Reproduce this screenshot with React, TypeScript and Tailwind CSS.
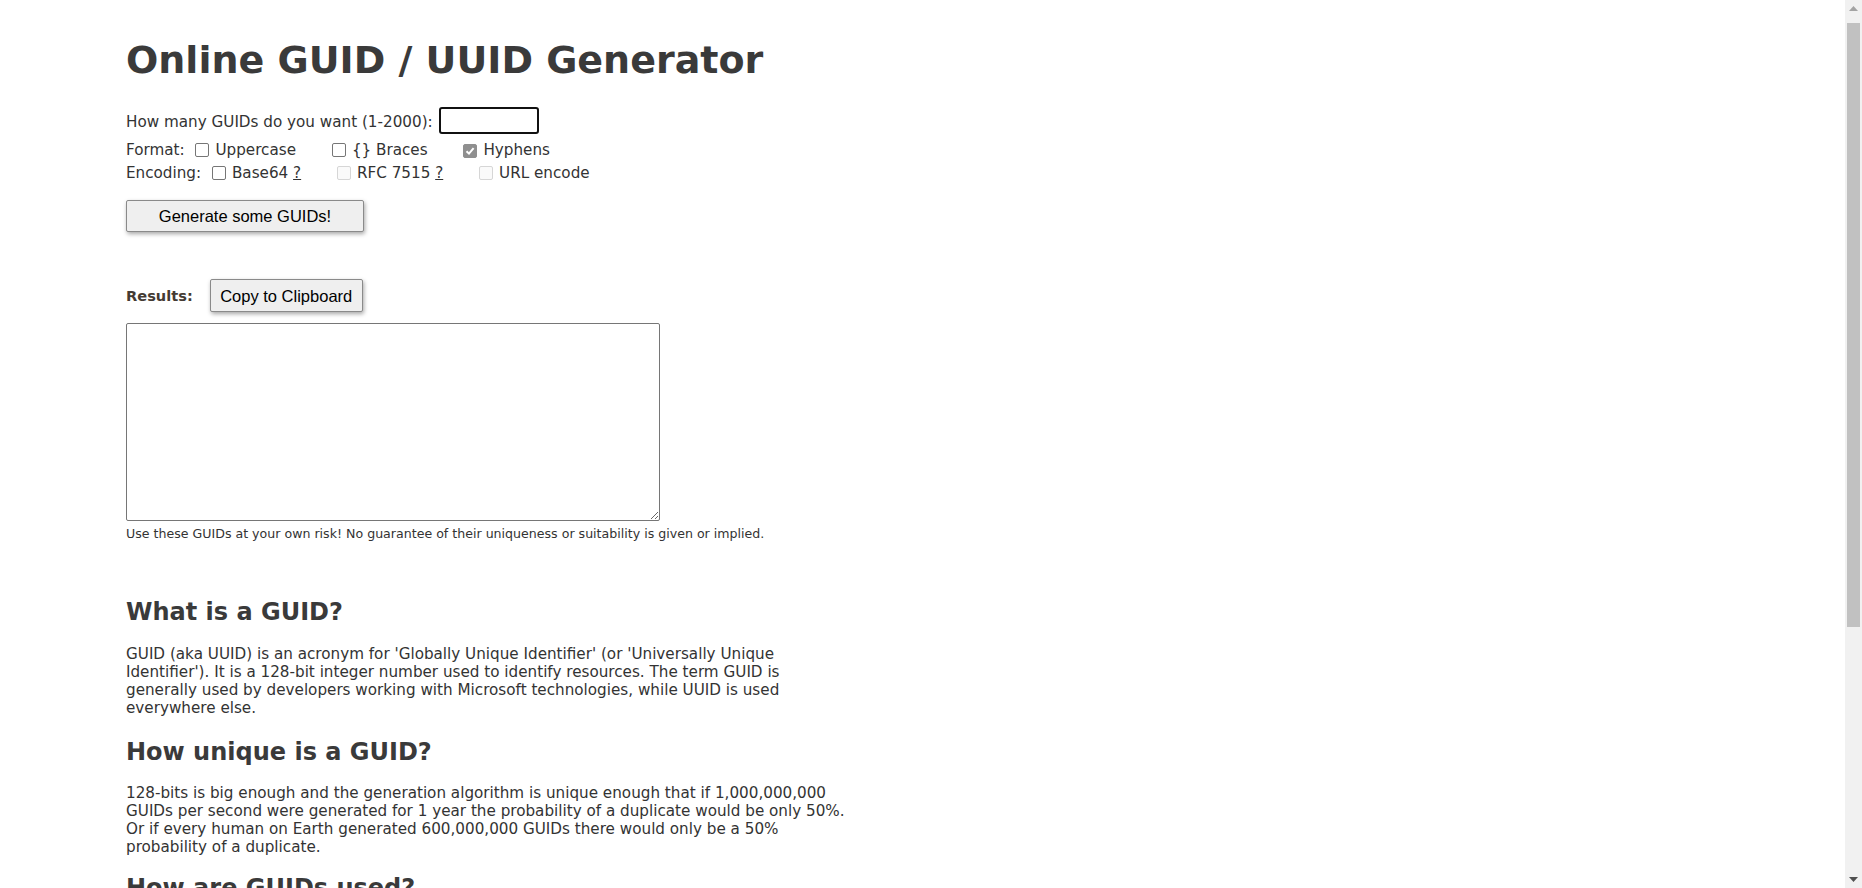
import React from 'react';

const body = { fontFamily: '"DejaVu Sans", Verdana, sans-serif' };
const btn = { fontFamily: '"Liberation Sans", Arial, sans-serif' };

function Box({ checked, disabled }: { checked?: boolean; disabled?: boolean }) {
  let cls = 'border-[#767676] bg-white';
  if (disabled && checked) cls = 'border-[#8f8f8f] bg-[#8f8f8f]';
  else if (disabled) cls = 'border-[#d6d6d6] bg-[#fafafa]';
  return (
    <span
      className={`ml-[6px] mr-[6px] inline-flex h-[14px] w-[14px] items-center justify-center rounded-[2px] border align-[-2px] ${cls}`}
    >
      {checked && (
        <svg viewBox="0 0 12 12" className="h-[12px] w-[12px]">
          <path d="M2.5 6.2 L5 8.6 L9.6 3.2" fill="none" stroke="#fff" strokeWidth="2" />
        </svg>
      )}
    </span>
  );
}

function Check({ label, checked, disabled, help }: { label: string; checked?: boolean; disabled?: boolean; help?: boolean }) {
  return (
    <label className="mr-[25px] whitespace-nowrap">
      {' '}
      <Box checked={checked} disabled={disabled} />
      {label}
      {help && (
        <>
          {' '}
          <a href="#" className="underline text-[#333]">?</a>
        </>
      )}
    </label>
  );
}

function Scrollbar() {
  return (
    <div className="flex w-[17px] shrink-0 flex-col bg-[#f1f1f1]">
      <div className="flex h-[17px] items-center justify-center">
        <svg width="9" height="5" viewBox="0 0 9 5">
          <path d="M0 5 L4.5 0 L9 5 Z" fill="#a3a3a3" />
        </svg>
      </div>
      <div className="mx-[2px] mt-[6px] h-[604px] bg-[#c1c1c1]" />
      <div className="flex-1" />
      <div className="flex h-[17px] items-center justify-center">
        <svg width="9" height="5" viewBox="0 0 9 5">
          <path d="M0 0 L9 0 L4.5 5 Z" fill="#505050" />
        </svg>
      </div>
    </div>
  );
}

export default function App() {
  return (
    <div className="flex h-[888px] overflow-hidden bg-white">
      <div className="min-w-0 flex-1 overflow-hidden">
        <div className="pl-[126px] text-[#333] text-[15.2px] leading-[18px]" style={body}>
          <div className="w-[725px] pb-[360px]">
            <h1 className="pt-[36px] text-[38px] leading-[48px] font-bold text-[#3a3a3a]">
              Online GUID / UUID Generator
            </h1>

            <div className="mt-[23px] flex items-end gap-[6px]">
              <span className="pb-[3px]">How many GUIDs do you want (1-2000):</span>
              <input
                type="text"
                className="h-[27px] w-[100px] rounded-[3px] border-2 border-[#111] px-1 outline-none"
              />
            </div>

            <div className="mt-[5px] leading-[22px] whitespace-nowrap">
              Format:
              <Check label="Uppercase" />
              <Check label="{} Braces" />
              <Check label="Hyphens" checked disabled />
            </div>
            <div className="mt-[1px] leading-[22px] whitespace-nowrap">
              Encoding:
              <Check label="Base64" help />
              <Check label="RFC 7515" disabled help />
              <Check label="URL encode" disabled />
            </div>

            <button
              className="mt-[16px] h-[32px] w-[238px] rounded-[2px] border border-[#8a8a8a] bg-[#efefef] text-[16.5px] text-black shadow-[1px_2px_4px_rgba(0,0,0,0.35)]"
              style={btn}
            >
              Generate some GUIDs!
            </button>

            <div className="mt-[47px] flex items-center gap-[17px]">
              <span className="pt-[1px] text-[14.6px] font-bold text-[#443a33]">Results:</span>
              <button
                className="h-[33px] w-[153px] rounded-[2px] border border-[#8a8a8a] bg-[#efefef] text-[16.5px] text-black shadow-[1px_2px_4px_rgba(0,0,0,0.35)]"
                style={btn}
              >
                Copy to Clipboard
              </button>
            </div>

            <textarea
              className="mt-[11px] block h-[198px] w-[534px] rounded-[2px] border border-[#767676] p-[2px] font-mono text-[13px] outline-none"
              readOnly
            />
            <p className="mt-[5px] text-[12.6px] leading-[15px]">
              Use these GUIDs at your own risk! No guarantee of their uniqueness or suitability is given or implied.
            </p>

            <h2 className="mt-[57px] text-[24px] leading-[29px] font-bold text-[#3a3a3a]">What is a GUID?</h2>
            <p className="mt-[18px]">
              GUID (aka UUID) is an acronym for 'Globally Unique Identifier' (or 'Universally Unique Identifier'). It
              is a 128-bit integer number used to identify resources. The term GUID is generally used by developers
              working with Microsoft technologies, while UUID is used everywhere else.
            </p>

            <h2 className="mt-[21px] text-[24px] leading-[29px] font-bold text-[#3a3a3a]">How unique is a GUID?</h2>
            <p className="mt-[17px]">
              128-bits is big enough and the generation algorithm is unique enough that if 1,000,000,000 GUIDs per
              second were generated for 1 year the probability of a duplicate would be only 50%. Or if every human on
              Earth generated 600,000,000 GUIDs there would only be a 50% probability of a duplicate.
            </p>

            <h2 className="mt-[18px] text-[24px] leading-[29px] font-bold text-[#3a3a3a]">How are GUIDs used?</h2>
            <p className="mt-[16px]">
              GUIDs are used in enterprise software development in C#, Java, and C++ as database keys, component
              identifiers, or just about anywhere else a truly unique identifier is required. GUIDs are also used to
              identify all interfaces and objects in COM programming.
            </p>
          </div>
        </div>
      </div>
      <Scrollbar />
    </div>
  );
}
